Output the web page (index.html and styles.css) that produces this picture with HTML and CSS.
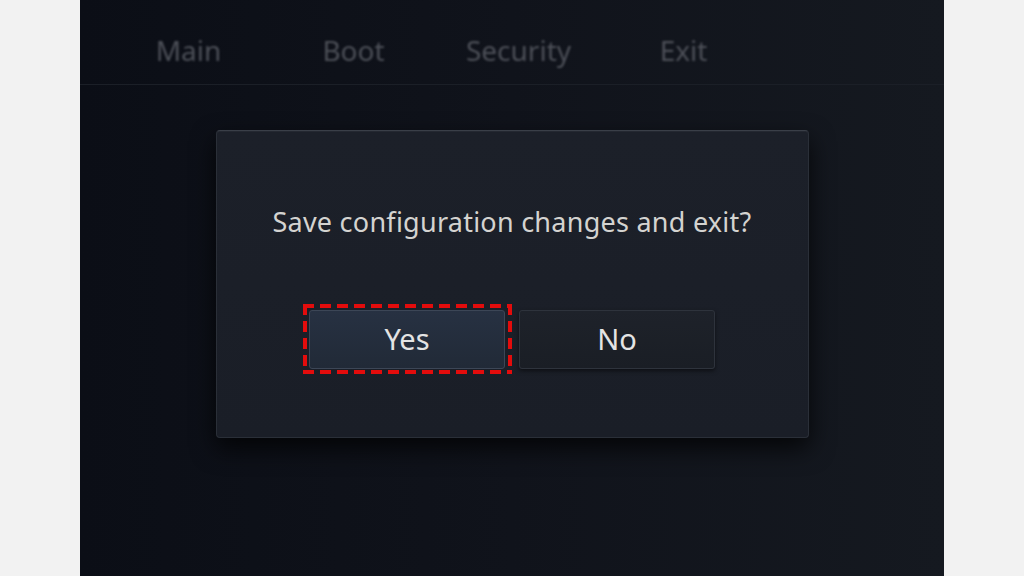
FILE: index.html
```html
<!DOCTYPE html>
<html lang="en">
<head>
<meta charset="utf-8">
<title>Save and Exit</title>
<link rel="stylesheet" href="styles.css">
</head>
<body>
<div class="screen">
  <nav class="tabs">
    <span class="tab">Main</span>
    <span class="tab">Boot</span>
    <span class="tab">Security</span>
    <span class="tab">Exit</span>
  </nav>
  <div class="stage">
    <div class="dialog" role="dialog">
      <p class="message">Save configuration changes and exit?</p>
      <div class="actions">
        <button class="btn btn-yes">Yes</button>
        <button class="btn btn-no">No</button>
      </div>
    </div>
  </div>
</div>
</body>
</html>
```

FILE: styles.css
```css
html, body {
  margin: 0;
  padding: 0;
  height: 100%;
}
body {
  background: #f2f2f2;
  display: flex;
  justify-content: center;
  font-family: "Noto Sans", "Open Sans", sans-serif;
}
.screen {
  width: 864px;
  height: 576px;
  background: linear-gradient(90deg, #0b0e16 0%, #10131b 50%, #151920 100%);
  display: flex;
  flex-direction: column;
}
.tabs {
  height: 85px;
  box-sizing: border-box;
  border-bottom: 1px solid #1b1f27;
  display: grid;
  grid-template-columns: repeat(4, 165px);
  padding: 16px 0 0 26px;
  align-items: center;
}
.tab {
  text-align: center;
  font-size: 28px;
  color: #4d5058;
  filter: blur(1.2px);
}
.stage {
  flex: 1;
  display: flex;
  justify-content: center;
  padding-top: 45px;
}
.dialog {
  width: 593px;
  height: 308px;
  box-sizing: border-box;
  background: linear-gradient(180deg, #1c2029 0%, #1a1e27 100%);
  border: 1px solid #2a2f38;
  border-top-color: #3a3f48;
  border-radius: 4px;
  box-shadow: 0 10px 24px rgba(0, 0, 0, 0.75), inset 0 1px 0 rgba(255,255,255,0.04);
  display: flex;
  flex-direction: column;
  align-items: center;
}
.message {
  margin: 74px 0 0;
  font-size: 27px;
  line-height: 34px;
  color: #d4d3d0;
  letter-spacing: 0.25px;
}
.actions {
  margin-top: 71px;
  display: flex;
  gap: 14px;
}
.btn {
  position: relative;
  width: 196px;
  height: 59px;
  font-family: inherit;
  font-size: 29px;
  color: #e4e4e4;
  border-radius: 3px;
  padding: 0 0 2px;
  cursor: pointer;
}
.btn-yes {
  background: linear-gradient(180deg, #273142 0%, #212a37 100%);
  border: 1px solid #3c4656;
  outline: none;
}
.btn-yes::after {
  content: "";
  position: absolute;
  top: -7px;
  left: -7px;
  right: -8px;
  bottom: -6px;
  background:
    repeating-linear-gradient(90deg, #e30c0c 0 11px, transparent 11px 17px) left top / 100% 4px no-repeat,
    repeating-linear-gradient(90deg, #e30c0c 0 11px, transparent 11px 17px) left bottom / 100% 4px no-repeat,
    repeating-linear-gradient(180deg, #e30c0c 0 11px, transparent 11px 17px) left top / 4px 100% no-repeat,
    repeating-linear-gradient(180deg, #e30c0c 0 11px, transparent 11px 17px) right top / 4px 100% no-repeat;
  pointer-events: none;
}
.btn-no {
  background: linear-gradient(180deg, #1e222a 0%, #1a1e25 100%);
  border: 1px solid #2e333c;
  box-shadow: 0 2px 4px rgba(0,0,0,0.5);
}
```
